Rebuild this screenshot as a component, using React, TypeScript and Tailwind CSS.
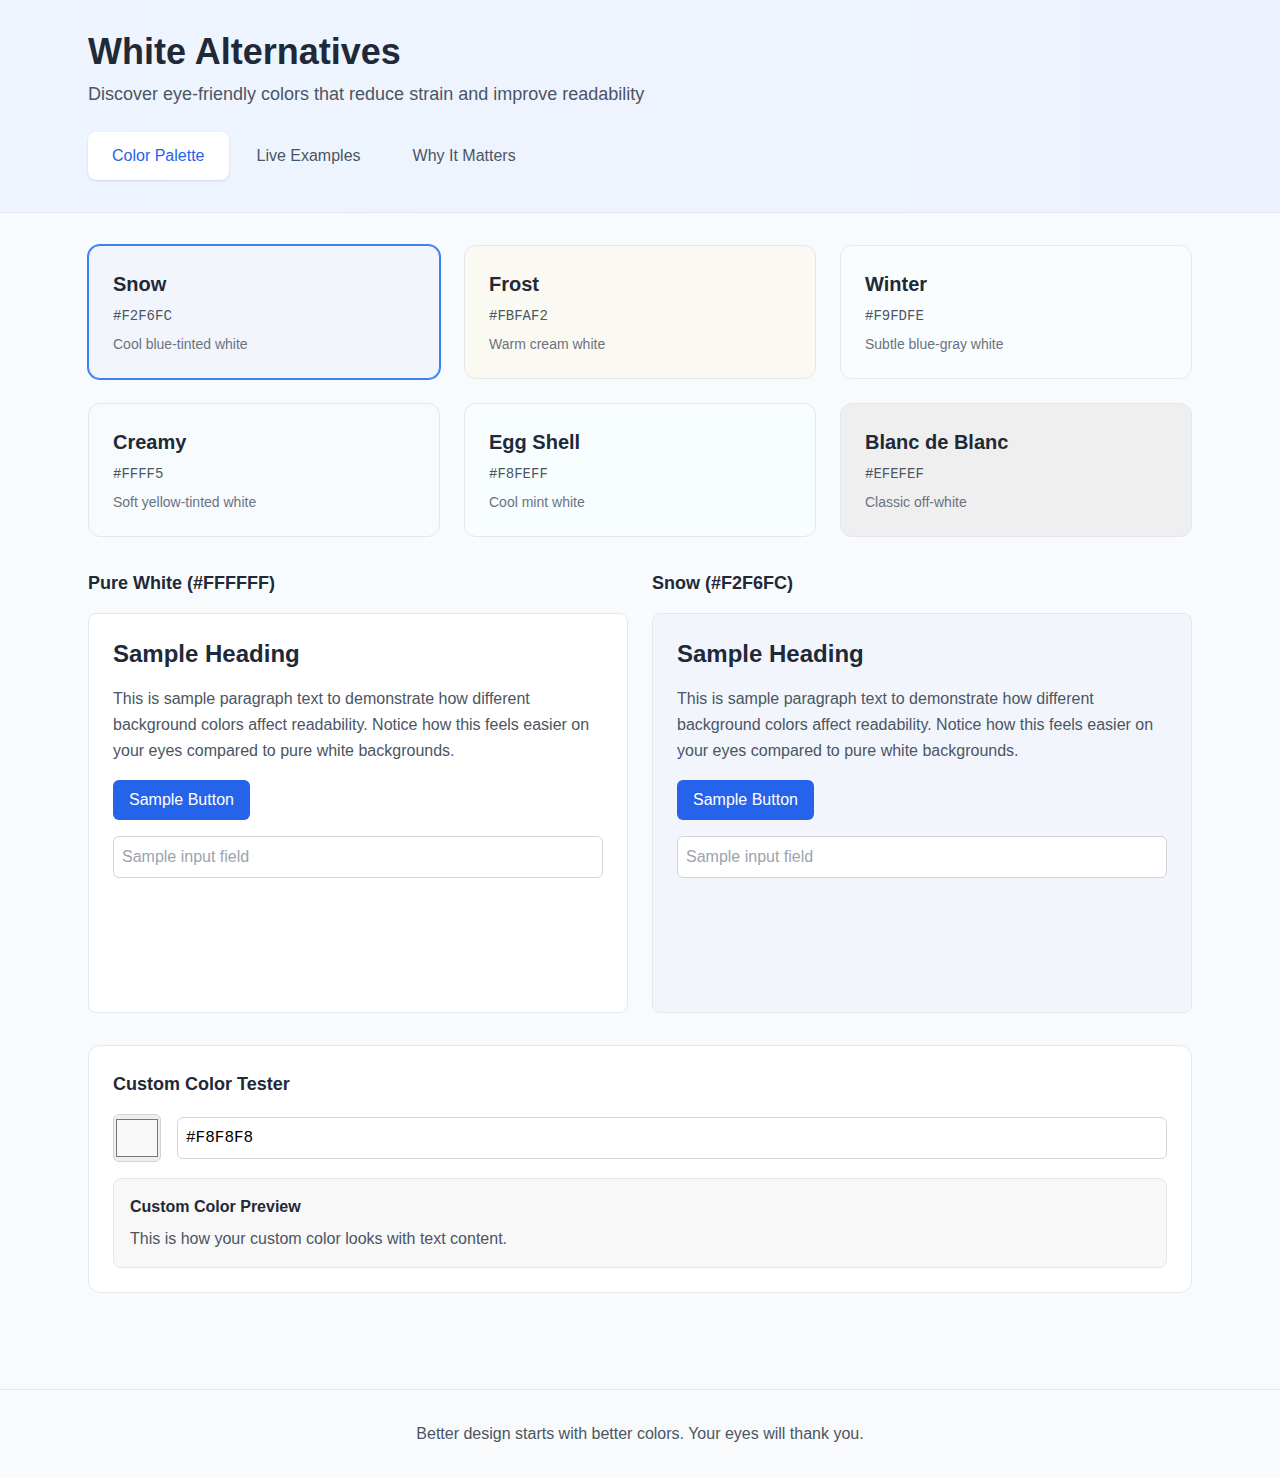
import { useState } from "react";

type Swatch = {
  name: string;
  hex: string;
  note: string;
  bg: string;
};

const swatches: Swatch[] = [
  { name: "Snow", hex: "#F2F6FC", note: "Cool blue-tinted white", bg: "bg-[#F2F6FC]" },
  { name: "Frost", hex: "#FBFAF2", note: "Warm cream white", bg: "bg-[#FBFAF2]" },
  { name: "Winter", hex: "#F9FDFE", note: "Subtle blue-gray white", bg: "bg-[#F9FDFE]" },
  { name: "Creamy", hex: "#FFFF5", note: "Soft yellow-tinted white", bg: "bg-transparent" },
  { name: "Egg Shell", hex: "#F8FEFF", note: "Cool mint white", bg: "bg-[#F8FEFF]" },
  { name: "Blanc de Blanc", hex: "#EFEFEF", note: "Classic off-white", bg: "bg-[#EFEFEF]" },
];

const tabs = ["Color Palette", "Live Examples", "Why It Matters"];

function SamplePanel({ bg }: { bg: string }) {
  return (
    <div className={`min-h-[400px] rounded-lg border border-[#e5e7eb] p-6 ${bg}`}>
      <h3 className="mb-4 text-2xl font-semibold text-[#1f2937]">Sample Heading</h3>
      <p className="mb-4 leading-relaxed text-[#4b5563]">
        This is sample paragraph text to demonstrate how different background colors affect
        readability. Notice how this feels easier on your eyes compared to pure white backgrounds.
      </p>
      <button className="mb-4 rounded-md bg-[#2563eb] px-4 py-2 text-white">Sample Button</button>
      <input
        type="text"
        placeholder="Sample input field"
        className="block w-full rounded-md border border-[#d1d5db] bg-white px-2 py-2 text-[#374151] placeholder:text-[#9ca3af]"
      />
    </div>
  );
}

export default function App() {
  const [activeTab, setActiveTab] = useState(0);
  const [selected, setSelected] = useState(0);
  const [custom, setCustom] = useState("#F8F8F8");

  return (
    <div className="min-h-screen bg-[#F7FBFE] font-['Liberation_Sans',Arial,sans-serif]">
      {/* header with tabs */}
      <header className="border-b border-[#e5e7eb] bg-gradient-to-r from-[#EEF5FF] to-[#EEF2FE]">
        <div className="mx-auto max-w-6xl px-6 py-8">
          <h1 className="text-4xl font-bold text-[#1f2937]">White Alternatives</h1>
          <p className="mt-2 text-lg text-[#4b5563]">
            Discover eye-friendly colors that reduce strain and improve readability
          </p>
          <nav className="mt-6 flex gap-1">
            {tabs.map((t, i) => (
              <button
                key={t}
                onClick={() => setActiveTab(i)}
                className={
                  i === activeTab
                    ? "rounded-lg bg-white px-6 py-3 text-[#2563eb] shadow-sm"
                    : "rounded-lg px-6 py-3 text-[#4b5563]"
                }
              >
                {t}
              </button>
            ))}
          </nav>
        </div>
      </header>

      <main className="mx-auto max-w-6xl px-6 pt-8 pb-8">
        {/* palette grid */}
        <div className="grid grid-cols-3 gap-6">
          {swatches.map((s, i) => (
            <button
              key={s.name}
              onClick={() => setSelected(i)}
              className={`rounded-xl border p-6 text-left ${s.bg} ${
                i === selected ? "border-[#3b82f6] ring-1 ring-[#3b82f6]" : "border-[#e5e7eb]"
              }`}
            >
              <h3 className="text-xl font-semibold text-[#1f2937]">{s.name}</h3>
              <p className="mt-2 font-['Liberation_Mono',monospace] text-sm text-[#4b5563]">{s.hex}</p>
              <p className="mt-2 text-sm text-[#6b7280]">{s.note}</p>
            </button>
          ))}
        </div>

        {/* side by side comparison */}
        <div className="mt-8 grid grid-cols-2 gap-6">
          <div>
            <h2 className="mb-4 text-lg font-semibold text-[#1f2937]">Pure White (#FFFFFF)</h2>
            <SamplePanel bg="bg-white" />
          </div>
          <div>
            <h2 className="mb-4 text-lg font-semibold text-[#1f2937]">
              {swatches[selected].name} ({swatches[selected].hex})
            </h2>
            <SamplePanel bg={swatches[selected].bg} />
          </div>
        </div>

        {/* custom tester */}
        <section className="mt-8 rounded-xl border border-[#e5e7eb] bg-white p-6">
          <h2 className="mb-4 text-lg font-semibold text-[#1f2937]">Custom Color Tester</h2>
          <div className="flex items-center gap-4">
            <input
              type="color"
              value={custom.toLowerCase()}
              onChange={(e) => setCustom(e.target.value.toUpperCase())}
              className="h-12 w-12 shrink-0 cursor-pointer rounded-md border border-[#d1d5db] bg-[#EFEFEF] p-0"
            />
            <input
              type="text"
              value={custom}
              onChange={(e) => setCustom(e.target.value)}
              className="flex-1 rounded-md border border-[#d1d5db] bg-white px-2 py-2 font-['Liberation_Mono',monospace] text-black"
            />
          </div>
          <div className="mt-4 rounded-lg border border-[#e5e7eb] p-4" style={{ backgroundColor: custom }}>
            <h3 className="mb-2 font-semibold text-[#1f2937]">Custom Color Preview</h3>
            <p className="text-[#4b5563]">This is how your custom color looks with text content.</p>
          </div>
        </section>
      </main>

      <footer className="mt-16 border-t border-[#e5e7eb] bg-[#f9fafb] py-8 text-center text-[#4b5563]">
        Better design starts with better colors. Your eyes will thank you.
      </footer>
    </div>
  );
}
